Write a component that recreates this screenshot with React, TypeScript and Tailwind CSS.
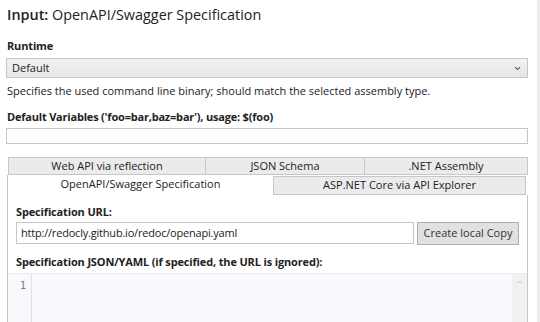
export default function App() {
  return (
    <div className="flex h-[322px] w-[540px] overflow-hidden bg-white font-['Open_Sans','Noto_Sans',sans-serif] text-[#222]">
      <div className="w-[537px] shrink-0 pl-[7px] pr-[9px]">
        <h1 className="mt-[5px] h-[20px] text-[14.4px] leading-[20px]">
          <span className="font-semibold">Input:</span> OpenAPI/Swagger Specification
        </h1>

        <div className="mt-[14px] h-[14px] text-[11px] font-bold leading-[14px] tracking-[-0.15px]">Runtime</div>
        <div className="-ml-px mt-[5px] flex h-[20px] items-center justify-between border border-[#c6c6c6] bg-gradient-to-b from-[#f2f2f2] to-[#e6e6e6] pl-[5px] pr-[6px] text-[11px]">
          <span>Default</span>
          <svg width="7" height="5" viewBox="0 0 7 5" className="text-[#555]">
            <path d="M1 1.2 L3.5 3.6 L6 1.2" fill="none" stroke="currentColor" strokeWidth="1.1" />
          </svg>
        </div>
        <p className="mt-[6px] h-[14px] text-[11px] leading-[14px]">
          Specifies the used command line binary; should match the selected assembly type.
        </p>

        <div className="mt-[12px] h-[14px] text-[11px] font-bold leading-[14px] tracking-[-0.2px]">
          Default Variables ('foo=bar,baz=bar'), usage: $(foo)
        </div>
        <div className="-ml-px mt-[4px] h-[16px] border border-[#c6c6c6] bg-white" />

        <div className="mt-[13px] text-[11px]">
          <div className="flex h-[18px] pl-px">
            <div className="flex w-[198px] items-center justify-center border border-[#c6c6c6] bg-[#ebebeb]">
              Web API via reflection
            </div>
            <div className="flex w-[159px] items-center justify-center border border-l-0 border-[#c6c6c6] bg-[#ebebeb]">
              JSON Schema
            </div>
            <div className="flex w-[163px] items-center justify-center border border-l-0 border-[#c6c6c6] bg-[#ebebeb]">
              .NET Assembly
            </div>
          </div>
          <div className="flex h-[20px] items-end">
            <div className="flex h-[20px] w-[266px] items-center justify-center border-l border-[#c6c6c6] bg-white pb-[1px]">
              OpenAPI/Swagger Specification
            </div>
            <div className="flex h-[19px] w-[253px] items-center justify-center border border-[#c6c6c6] bg-[#ebebeb]">
              ASP.NET Core via API Explorer
            </div>
          </div>

          <div className="h-[200px] w-[521px] border-x border-[#c6c6c6] bg-white">
            <div className="px-[8px] pt-[10px]">
              <div className="h-[14px] font-bold leading-[14px] tracking-[-0.15px]">Specification URL:</div>
              <div className="mt-[3px] flex gap-[3px]">
                <div className="flex h-[22px] w-[398px] items-center border border-[#c6c6c6] px-[4px] tracking-[-0.2px]">
                  http://redocly.github.io/redoc/openapi.yaml
                </div>
                <button className="h-[23px] w-[102px] border border-[#adadad] bg-[#e1e1e1] text-[11px] text-[#333]">
                  Create local Copy
                </button>
              </div>
              <div className="mt-[10px] h-[14px] font-bold leading-[14px] tracking-[-0.15px]">
                Specification JSON/YAML (if specified, the URL is ignored):
              </div>
            </div>
            <div className="mt-[4px] flex h-[60px] border-t border-[#ececec] bg-[#f7f9fc]">
              <div className="w-[24px] border-r border-[#dde1e6] pr-[5px] pt-[6px] text-right font-['DejaVu_Sans_Mono',monospace] text-[10px] leading-[12px] text-[#777]">
                1
              </div>
              <div className="flex-1" />
              <div className="flex w-[15px] justify-center bg-[#f0f1f3] pt-[6px]">
                <svg width="7" height="4" viewBox="0 0 7 4">
                  <path d="M1 3.5 L3.5 1 L6 3.5" fill="none" stroke="#c4c4c4" strokeWidth="1" />
                </svg>
              </div>
            </div>
          </div>
        </div>
      </div>
      <div className="w-[3px] bg-[#ececec]" />
    </div>
  );
}
